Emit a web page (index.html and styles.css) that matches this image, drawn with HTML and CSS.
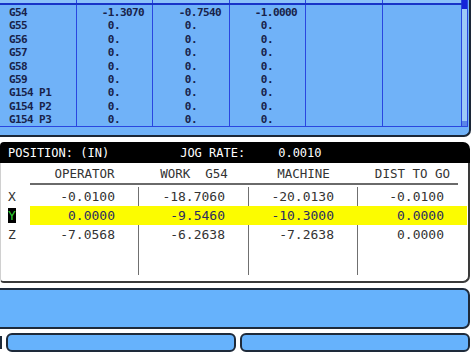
FILE: index.html
```html
<!DOCTYPE html>
<html lang="en">
<head>
    <meta charset="UTF-8">
    <meta name="viewport" content="width=device-width, initial-scale=1.0">
    <title>Work Offsets / Position</title>
    <link rel="stylesheet" href="styles.css">
</head>
<body>

    <div class="offsets">
        <div class="table">
            <div class="grid">
                <div class="orow head">
                    <div class="c"></div><div class="c"></div><div class="c"></div>
                    <div class="c"></div><div class="c"></div><div class="c"></div>
                </div>
                <div class="orow">
                    <div class="c name">G54</div><div class="c num">-1.3070</div><div class="c num">-0.7540</div>
                    <div class="c num">-1.0000</div><div class="c"></div><div class="c"></div>
                </div>
                <div class="orow">
                    <div class="c name">G55</div><div class="c num">0.    </div><div class="c num">0.    </div>
                    <div class="c num">0.    </div><div class="c"></div><div class="c"></div>
                </div>
                <div class="orow">
                    <div class="c name">G56</div><div class="c num">0.    </div><div class="c num">0.    </div>
                    <div class="c num">0.    </div><div class="c"></div><div class="c"></div>
                </div>
                <div class="orow">
                    <div class="c name">G57</div><div class="c num">0.    </div><div class="c num">0.    </div>
                    <div class="c num">0.    </div><div class="c"></div><div class="c"></div>
                </div>
                <div class="orow">
                    <div class="c name">G58</div><div class="c num">0.    </div><div class="c num">0.    </div>
                    <div class="c num">0.    </div><div class="c"></div><div class="c"></div>
                </div>
                <div class="orow">
                    <div class="c name">G59</div><div class="c num">0.    </div><div class="c num">0.    </div>
                    <div class="c num">0.    </div><div class="c"></div><div class="c"></div>
                </div>
                <div class="orow">
                    <div class="c name">G154 P1</div><div class="c num">0.    </div><div class="c num">0.    </div>
                    <div class="c num">0.    </div><div class="c"></div><div class="c"></div>
                </div>
                <div class="orow">
                    <div class="c name">G154 P2</div><div class="c num">0.    </div><div class="c num">0.    </div>
                    <div class="c num">0.    </div><div class="c"></div><div class="c"></div>
                </div>
                <div class="orow">
                    <div class="c name">G154 P3</div><div class="c num">0.    </div><div class="c num">0.    </div>
                    <div class="c num">0.    </div><div class="c"></div><div class="c"></div>
                </div>
            </div>
            <div class="scrollbar">
                <div class="thumb"></div>
                <div class="arrow"></div>
            </div>
        </div>
    </div>

    <div class="position">
        <div class="pos-title">
            <span>POSITION: (IN)</span>
            <span class="jog">JOG RATE:</span>
            <span class="rate">0.0010</span>
        </div>
        <div class="pos-body">
            <div class="prow heads">
                <div></div>
                <div class="h">OPERATOR</div>
                <div class="h">WORK&nbsp;&nbsp;G54</div>
                <div class="h">MACHINE</div>
                <div class="h">DIST TO GO</div>
            </div>
            <div class="rule"></div>
            <div class="prow">
                <div class="axis">X</div>
                <div class="v">-0.0100</div>
                <div class="v">-18.7060</div>
                <div class="v">-20.0130</div>
                <div class="v">-0.0100</div>
            </div>
            <div class="prow sel">
                <div class="axis"><span class="cur">Y</span></div>
                <div class="v">0.0000</div>
                <div class="v">-9.5460</div>
                <div class="v">-10.3000</div>
                <div class="v">0.0000</div>
            </div>
            <div class="prow">
                <div class="axis">Z</div>
                <div class="v">-7.0568</div>
                <div class="v">-6.2638</div>
                <div class="v">-7.2638</div>
                <div class="v">0.0000</div>
            </div>
            <div class="prow filler">
                <div></div><div class="v"></div><div class="v"></div><div class="v"></div><div class="v"></div>
            </div>
        </div>
    </div>

    <div class="message"></div>

    <div class="keys">
        <div class="key-edge"></div>
        <div class="key"></div>
        <div class="key"></div>
    </div>

</body>
</html>
```

FILE: styles.css
```css
body {
    margin: 0;
    width: 474px;
    height: 355px;
    overflow: hidden;
    background-color: #ffffff;
    font-family: "DejaVu Sans Mono", monospace;
}

/* work offset table */
.offsets {
    width: 469px;
    height: 135px;
    background-color: #70b2f8;
    border-right: 2px solid #1c2838;
    border-bottom: 2px solid #1c2838;
    border-bottom-right-radius: 7px;
}
.table {
    display: flex;
    border-bottom: 1px solid #2a46e0;
    width: 468px;
}
.grid {
    width: 462px;
}
.orow {
    display: grid;
    grid-template-columns: 77px 76px 77px 76px 77px 79px;
    height: 13.4px;
}
.orow.head {
    height: 3px;
    border-bottom: 2px solid #1834c8;
    background-color: #8cc2fa;
}
.c {
    border-right: 1.5px solid #2a46e0;
    font-size: 11px;
    letter-spacing: -0.6px;
    font-weight: bold;
    line-height: 15px;
    color: #18224a;
    white-space: pre;
}
.c.name {
    padding-left: 9px;
}
.c.num {
    text-align: right;
    padding-right: 8px;
}
.scrollbar {
    width: 5px;
    border-right: 1px solid #2a46e0;
    background-color: #9ccaf8;
    display: flex;
    flex-direction: column;
    justify-content: space-between;
}
.thumb {
    height: 9px;
    background-color: #1424d8;
}
.arrow {
    height: 5px;
    background-color: #5a86e8;
}

/* position display */
.position {
    margin-top: 5px;
    width: 470px;
}
.pos-title {
    display: flex;
    height: 21px;
    align-items: center;
    padding-left: 8px;
    background-color: #000000;
    color: #ffffff;
    font-size: 12px;
    border-top-left-radius: 4px;
    border-top-right-radius: 7px;
    white-space: pre;
}
.jog {
    margin-left: 71px;
}
.rate {
    margin-left: 33px;
}
.pos-body {
    height: 118px;
    background-color: #ffffff;
    border-left: 1px solid #d0d0d0;
    border-right: 2px solid #3a3a3a;
    border-bottom: 2px solid #3a3a3a;
    border-bottom-right-radius: 7px;
    border-bottom-left-radius: 4px;
}
.prow {
    display: grid;
    grid-template-columns: 29px 109px 110px 109px 109px;
    height: 19px;
    font-size: 13px;
    line-height: 19px;
    color: #333333;
}
.prow.heads {
    height: 20px;
    line-height: 22px;
    font-size: 12.5px;
}
.h {
    text-align: center;
}
.rule {
    height: 1.5px;
    margin: 0 10px 2px 29px;
    background-color: #6a6a6a;
}
.axis {
    padding-left: 7px;
}
.cur {
    display: inline-block;
    width: 8px;
    height: 15px;
    line-height: 15px;
    margin-top: 1px;
    background-color: #000000;
    color: #30d030;
}
.v {
    text-align: right;
    padding-right: 23px;
}
.prow .v:nth-child(2),
.prow .v:nth-child(3),
.prow .v:nth-child(4) {
    border-right: 1px solid #707070;
}
.prow.sel .v {
    background-color: #fcfc00;
    border-right-color: #fcfc00;
    color: #2c2c60;
}
.prow.filler {
    height: 31px;
}

/* message line */
.message {
    margin-top: 5px;
    width: 468px;
    height: 37px;
    background-color: #66b2fc;
    border: 2px solid #1e2a3a;
    border-left: none;
    border-radius: 0 7px 7px 0;
}

/* soft keys */
.keys {
    display: flex;
    gap: 4px;
    margin-top: 4px;
    height: 19px;
}
.key-edge {
    width: 2px;
    margin: 3px 0;
    background-color: #1e2a3a;
}
.key {
    width: 226px;
    background-color: #66b2fc;
    border: 2px solid #1e2a3a;
    border-radius: 6px;
}
```
